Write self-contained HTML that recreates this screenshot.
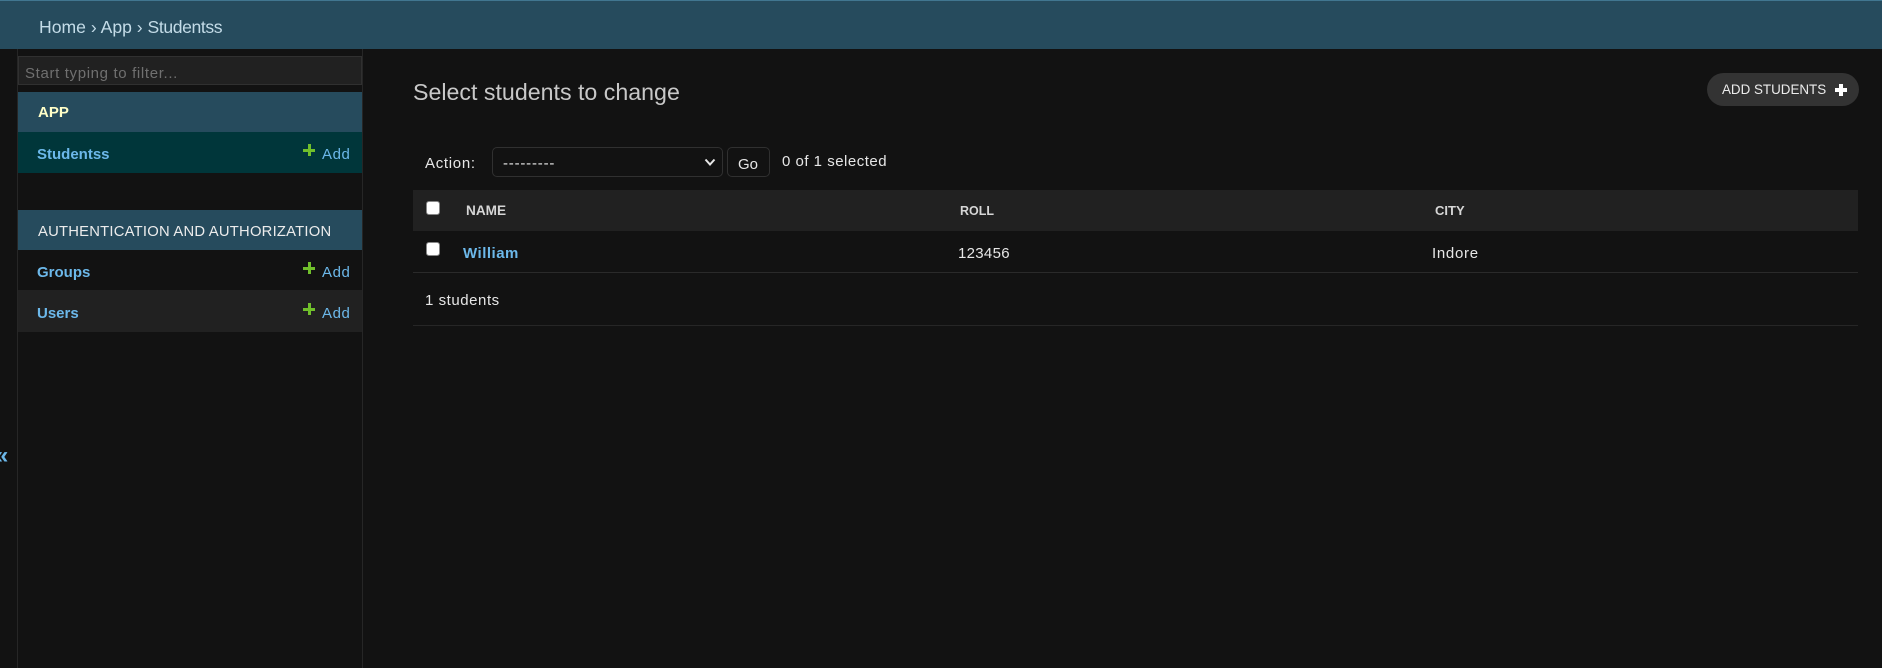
<!DOCTYPE html>
<html><head><meta charset="utf-8"><style>
*{box-sizing:border-box}
html,body{margin:0;padding:0;width:1882px;height:668px;overflow:hidden;background:#121212;font-family:"Liberation Sans",sans-serif;color:#e6e6e6}
.a{position:absolute;white-space:nowrap}
.t{font-size:15px;line-height:20px}
.link{color:#6cb8ea}
.b{font-weight:bold}
.plus{position:absolute;width:12px;height:12px}
.plus:before,.plus:after{content:"";position:absolute;background:#70bf2b}
.plus:before{left:4.5px;top:0;width:3px;height:12px}
.plus:after{left:0;top:4.5px;width:12px;height:3px}
.plus.w:before,.plus.w:after{background:#fff}
.plus.w:before{left:4px;width:4px}
.plus.w:after{top:4px;height:4px}
.cb{position:absolute;left:426px;width:14px;height:14px;background:#fff;border-radius:3px;border:1px solid #888}
</style></head><body>
<div class="a" style="left:0;top:0;width:1882px;height:49px;background:#264b5d;border-top:1px solid #417690"></div>
<div class="a" style="left:39px;top:15px;font-size:17.6px;line-height:24px;color:#c4dce8">Home › App › <span style="letter-spacing:-.4px">Studentss</span></div>

<div class="a" style="left:17px;top:49px;width:346px;height:619px;border-left:1px solid #262626;border-right:1px solid #262626"></div>
<div class="a" style="left:18px;top:56px;width:344px;height:29px;background:#212121;border:1px solid #303030"></div>
<div class="a t" style="left:25px;top:64px;color:#707070;font-size:15px;letter-spacing:.65px">Start typing to filter...</div>

<div class="a" style="left:18px;top:92px;width:344px;height:40px;background:#264b5d"></div>
<div class="a t b" style="left:38px;top:103px;color:#ffffc8;font-size:15px">APP</div>
<div class="a" style="left:18px;top:132px;width:344px;height:41px;background:#00363a"></div>
<div class="a t b link" style="left:37px;top:145px;font-size:15px">Studentss</div>
<div class="plus" style="left:303px;top:144px"></div>
<div class="a t link" style="left:322px;top:145px;letter-spacing:.6px">Add</div>

<div class="a" style="left:18px;top:210px;width:344px;height:40px;background:#264b5d"></div>
<div class="a t" style="left:38px;top:222px;color:#ececec;font-size:14.8px;letter-spacing:.22px">AUTHENTICATION AND AUTHORIZATION</div>
<div class="a t b link" style="left:37px;top:263px">Groups</div>
<div class="plus" style="left:303px;top:262px"></div>
<div class="a t link" style="left:322px;top:263px;letter-spacing:.6px">Add</div>
<div class="a" style="left:18px;top:290px;width:344px;height:42px;background:#212121"></div>
<div class="a t b link" style="left:37px;top:304px">Users</div>
<div class="plus" style="left:303px;top:303px"></div>
<div class="a t link" style="left:322px;top:304px;letter-spacing:.6px">Add</div>
<div class="a b link" style="left:-5px;top:442px;font-size:24px;line-height:28px">«</div>

<div class="a" style="left:413px;top:77px;font-size:23.2px;line-height:30px;color:#c8c8c8">Select students to change</div>

<div class="a" style="left:1707px;top:73px;width:152px;height:33px;background:#333;border-radius:17px"></div>
<div class="a" style="left:1722px;top:81px;font-size:13.4px;line-height:18px;color:#ececec">ADD STUDENTS</div>
<div class="plus w" style="left:1835px;top:84px"></div>

<div class="a t" style="left:425px;top:154px;letter-spacing:.7px">Action:</div>
<div class="a" style="left:492px;top:147px;width:231px;height:30px;border:1px solid #303030;border-radius:5px;background:#121212"></div>
<div class="a t" style="left:503px;top:154px;letter-spacing:.8px">---------</div>
<svg class="a" style="left:704px;top:158px" width="12" height="9" viewBox="0 0 12 9"><path d="M1.5 1.5L6 6.5L10.5 1.5" fill="none" stroke="#e6e6e6" stroke-width="2"/></svg>
<div class="a" style="left:727px;top:147px;width:43px;height:30px;border:1px solid #303030;border-radius:5px"></div>
<div class="a t" style="left:738px;top:155px">Go</div>
<div class="a t" style="left:782px;top:152px;letter-spacing:.5px">0 of 1 selected</div>

<div class="a" style="left:413px;top:190px;width:1445px;height:41px;background:#212121"></div>
<div class="cb" style="top:201px"></div>
<div class="a b" style="left:466px;top:202px;font-size:13.6px;line-height:18px;color:#d6d6d6">NAME</div>
<div class="a b" style="left:960px;top:202px;font-size:12.5px;line-height:18px;color:#d6d6d6">ROLL</div>
<div class="a b" style="left:1435px;top:202px;font-size:13px;line-height:18px;color:#d6d6d6">CITY</div>

<div class="cb" style="top:242px"></div>
<div class="a t b link" style="left:463px;top:244px;letter-spacing:.5px">William</div>
<div class="a t" style="left:958px;top:244px;letter-spacing:.3px">123456</div>
<div class="a t" style="left:1432px;top:244px;letter-spacing:.7px">Indore</div>
<div class="a" style="left:413px;top:272px;width:1445px;height:1px;background:#2a2a2a"></div>
<div class="a t" style="left:425px;top:291px;letter-spacing:.55px">1 students</div>
<div class="a" style="left:413px;top:325px;width:1445px;height:1px;background:#262626"></div>
</body></html>
